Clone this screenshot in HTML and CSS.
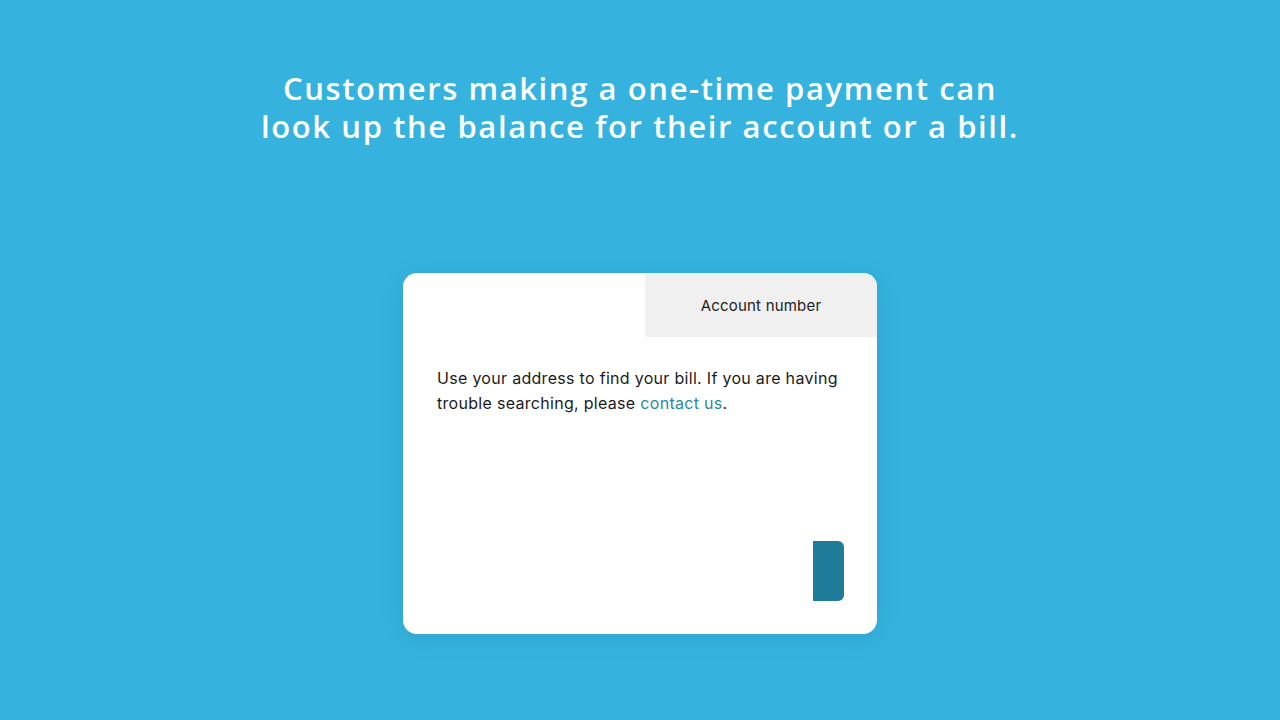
FILE: index.html
```html
<!DOCTYPE html>
<html>
<head>
<meta charset="utf-8">
<link rel="stylesheet" href="styles.css">
</head>
<body>
<div class="stage">
  <h1 class="headline">Customers making a one-time payment can<br>look up the balance for their account or a bill.</h1>
  <div class="card">
    <div class="tabs">
      <div class="tab tab-blank"></div>
      <div class="tab tab-active">Account number</div>
    </div>
    <div class="card-body">
      <p class="desc">Use your address to find your bill. If you are having trouble searching, please <a class="link" href="#">contact&nbsp;us</a>.</p>
      <div class="actions">
        <div class="btn"></div>
      </div>
    </div>
  </div>
</div>
</body>
</html>
```
FILE: styles.css
```css
html, body {
  margin: 0;
  padding: 0;
}
body {
  background: #35b3de;
  width: 1280px;
  height: 720px;
  overflow: hidden;
}
.stage {
  display: flex;
  flex-direction: column;
  align-items: center;
  padding-top: 69px;
}
.headline {
  margin: 0;
  color: #ffffff;
  font-family: "Open Sans", sans-serif;
  font-weight: 600;
  font-size: 31px;
  line-height: 38px;
  text-align: center;
  letter-spacing: 1.6px;
}
.card {
  margin-top: 128px;
  width: 474px;
  height: 361px;
  background: #ffffff;
  border-radius: 14px;
  overflow: hidden;
  display: flex;
  flex-direction: column;
  box-shadow: 0 4px 24px rgba(0, 60, 100, 0.12);
}
.tabs {
  display: flex;
  height: 64px;
}
.tab-blank {
  width: 242px;
}
.tab-active {
  flex: 1;
  background: #f0f0f0;
  display: flex;
  align-items: center;
  justify-content: center;
  font-family: "Inter", sans-serif;
  font-size: 15px;
  letter-spacing: 0.2px;
  color: #1d1d1d;
  padding-top: 1px;
}
.card-body {
  flex: 1;
  display: flex;
  flex-direction: column;
  padding: 29px 33px 33px 34px;
}
.desc {
  margin: 0;
  font-family: "Inter", sans-serif;
  font-size: 16px;
  line-height: 25px;
  letter-spacing: 0.3px;
  color: #1b1b1b;
}
.link {
  color: #2a8a9c;
  text-decoration: none;
}
.actions {
  margin-top: auto;
  display: flex;
  justify-content: flex-end;
}
.btn {
  width: 31px;
  height: 60px;
  background: #1e7b9a;
  border-radius: 0 6px 6px 0;
}
```
